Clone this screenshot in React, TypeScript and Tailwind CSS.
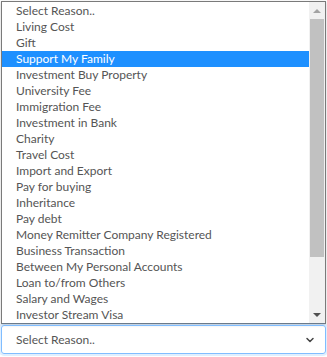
import { FiChevronDown } from "react-icons/fi";

const REASONS = [
  "Select Reason..",
  "Living Cost",
  "Gift",
  "Support My Family",
  "Investment Buy Property",
  "University Fee",
  "Immigration Fee",
  "Investment in Bank",
  "Charity",
  "Travel Cost",
  "Import and Export",
  "Pay for buying",
  "Inheritance",
  "Pay debt",
  "Money Remitter Company Registered",
  "Business Transaction",
  "Between My Personal Accounts",
  "Loan to/from Others",
  "Salary and Wages",
  "Investor Stream Visa",
];

export default function App() {
  const selected = 3;

  return (
    <div className="w-[327px] h-[357px] bg-white font-['Lato',sans-serif] text-[12px] text-[#555]">
      <div className="flex flex-col">
        {/* open list */}
        <div className="ml-px mt-px w-[325px] h-[323px] border border-[#7a7a7a] bg-white flex shadow-[0_1px_3px_rgba(0,0,0,0.2)]">
          <ul className="flex-1 pt-[1px]">
            {REASONS.map((r, i) => (
              <li
                key={r}
                className={
                  i === selected
                    ? "h-4 leading-4 pl-[14px] bg-[#1e90ff] text-white"
                    : "h-4 leading-4 pl-[14px]"
                }
              >
                {r}
              </li>
            ))}
          </ul>
          <div className="w-[16px] bg-[#f1f1f1] flex flex-col items-center">
            <div className="h-[17px] flex items-center justify-center">
              <div className="w-0 h-0 border-l-[4px] border-r-[4px] border-b-[4px] border-l-transparent border-r-transparent border-b-[#a3a3a3]" />
            </div>
            <div className="w-[14px] h-[238px] bg-[#c1c1c1]" />
            <div className="flex-1" />
            <div className="h-[17px] flex items-center justify-center">
              <div className="w-0 h-0 border-l-[4px] border-r-[4px] border-t-[4px] border-l-transparent border-r-transparent border-t-[#505050]" />
            </div>
          </div>
        </div>

        {/* closed select */}
        <div className="ml-px mt-px w-[325px] h-[29px] border border-[#80bdff] rounded-[3px] shadow-[0_0_0_2px_rgba(0,123,255,0.12)] flex items-center pl-[14px] pr-[9px]">
          <span className="flex-1">Select Reason..</span>
          <FiChevronDown className="text-[12px] text-[#444]" strokeWidth={3} />
        </div>
      </div>
    </div>
  );
}
